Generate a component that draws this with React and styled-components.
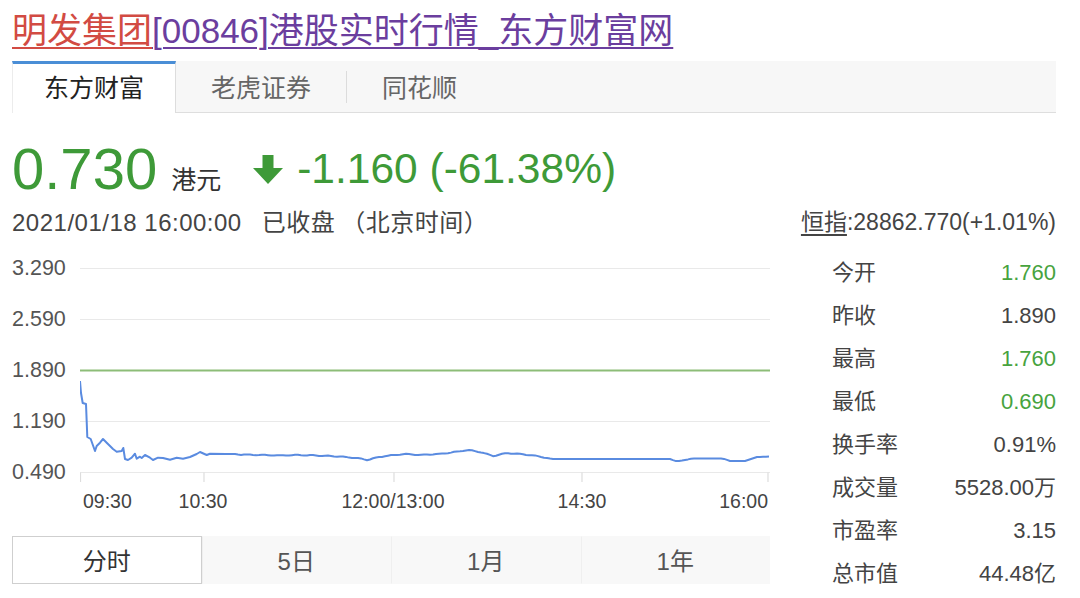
import React from "react";
import styled, { createGlobalStyle } from "styled-components";

const GlobalStyle = createGlobalStyle`
  html, body { margin: 0; padding: 0; background: #ffffff; }
  body {
    font-family: "Liberation Sans", "Noto Sans CJK SC", sans-serif;
    color: #333;
  }
  * { box-sizing: border-box; }
`;

const Page = styled.div`
  width: 1080px;
  height: 598px;
  padding: 9px 24px 0 12px;
  overflow: hidden;
`;

const Title = styled.h1`
  margin: 0 0 8px;
  font-size: 35px;
  font-weight: normal;
  line-height: 44px;
  white-space: nowrap;
`;

const TitleLink = styled.a`
  color: ${(p) => p.$color};
  text-decoration: underline;
  text-decoration-thickness: 2px;
  text-underline-offset: 4px;
`;

const TabBar = styled.div`
  display: flex;
  height: 52px;
  background: #f7f7f7;
  border-bottom: 1px solid #dedede;
`;

const Tab = styled.div`
  display: flex;
  align-items: center;
  padding: 0 ${(p) => (p.$active ? "31px" : "34px")} 5px;
  font-size: 25px;
  color: ${(p) => (p.$active ? "#222" : "#666")};
  background: ${(p) => (p.$active ? "#fff" : "transparent")};
  border-top: 3px solid ${(p) => (p.$active ? "#4a8ed6" : "transparent")};
  border-left: 1px solid ${(p) => (p.$active ? "#ececec" : "transparent")};
  border-right: 1px solid ${(p) => (p.$active ? "#dddddd" : "transparent")};
  margin-bottom: ${(p) => (p.$active ? "-1px" : "0")};
  position: relative;
`;

const TabDivider = styled.div`
  width: 1px;
  height: 32px;
  align-self: center;
  background: #dcdcdc;
`;

const PriceRow = styled.div`
  display: flex;
  align-items: center;
  height: 64px;
  margin-top: 24px;
`;

const Price = styled.span`
  font-size: 58px;
  line-height: 64px;
  color: #3e9a38;
  align-self: baseline;
`;

const Unit = styled.span`
  font-size: 25px;
  line-height: 30px;
  color: #333;
  margin-left: 14px;
  align-self: baseline;
`;

const Arrow = styled.svg`
  width: 34px;
  height: 34px;
  margin-left: 30px;
  flex: none;
`;

const Change = styled.span`
  font-size: 42.5px;
  line-height: 64px;
  color: #3e9a38;
  margin-left: 12px;
`;

const InfoRow = styled.div`
  display: flex;
  justify-content: space-between;
  align-items: center;
  height: 32px;
  margin-top: 3px;
  margin-bottom: 7px;
`;

const DateText = styled.div`
  font-size: 24px;
  letter-spacing: 0.5px;
  color: #444;
  white-space: nowrap;
`;

const Gap = styled.span`
  display: inline-block;
  width: ${(p) => p.$w}px;
`;

const IndexText = styled.div`
  font-size: 23px;
  color: #444;
  white-space: nowrap;
`;

const Under = styled.span`
  text-decoration: underline;
  text-underline-offset: 4px;
`;

const Main = styled.div`
  display: flex;
`;

const ChartPanel = styled.div`
  width: 758px;
  display: flex;
  flex-direction: column;
`;

const ChartArea = styled.div`
  display: flex;
  height: 240px;
`;

const YLabels = styled.div`
  width: 68px;
  height: 240px;
  display: flex;
  flex-direction: column;
  overflow: visible;
`;

const YLabel = styled.div`
  flex: none;
  height: 51px;
  line-height: 51px;
  font-size: 21.5px;
  color: #555;
`;

const ChartSvg = styled.svg`
  display: block;
  width: 690px;
  height: 240px;
`;

const XAxis = styled.div`
  position: relative;
  height: 24px;
  margin-top: 6px;
  margin-left: 68px;
  width: 690px;
`;

const XLabel = styled.span`
  position: absolute;
  top: 0;
  line-height: 24px;
  font-size: 19.5px;
  color: #444;
  white-space: nowrap;
  transform: translateX(${(p) => p.$shift});
`;

const PeriodBar = styled.div`
  display: grid;
  grid-template-columns: repeat(4, 1fr);
  height: 48px;
  margin-top: 23px;
  background: #f8f8f8;
`;

const Period = styled.div`
  display: flex;
  align-items: center;
  justify-content: center;
  padding-bottom: 2px;
  font-size: 24px;
  color: ${(p) => (p.$active ? "#333" : "#555")};
  background: ${(p) => (p.$active ? "#fff" : "transparent")};
  border: 1px solid ${(p) => (p.$active ? "#cfcfcf" : "transparent")};
  border-left-color: ${(p) => (p.$active ? "#cfcfcf" : "#efefef")};
`;

const Stats = styled.div`
  width: 224px;
  margin-left: auto;
  padding-top: 8px;
  display: flex;
  flex-direction: column;
`;

const StatRow = styled.div`
  display: flex;
  justify-content: space-between;
  height: 43px;
  line-height: 43px;
  font-size: 22px;
`;

const StatLabel = styled.span`
  color: #444;
`;

const StatValue = styled.span`
  color: ${(p) => (p.$green ? "#47a33e" : "#444")};
`;

// ---- chart data ----
const OX = 80;
const OY = 242;
const key = [
  [80, 380], [81, 392], [82.7, 402], [86, 403], [87.3, 436], [90.7, 438],
  [95, 450], [96.7, 445], [100, 441.7], [103, 438], [106.7, 441.7], [110, 445],
  [113, 448], [116.7, 450.7], [121.7, 450], [123.3, 447], [125, 458], [128, 459],
  [131.7, 456.7], [135, 452.7], [136.7, 457.7], [140, 455.7], [141.7, 457],
  [145, 454], [150, 456.7], [153, 459], [158, 456.7], [163, 457], [170, 458.7],
  [176.7, 456.7], [183, 457.7], [190, 456], [196.7, 453], [200, 451],
  [206.7, 454], [210, 452.7], [226, 453],
];
const flat = [
  [226, 453], [240, 453.5], [260, 454], [280, 454.5], [300, 454], [330, 455],
  [345, 456], [360, 457.5], [367, 459], [375, 457], [385, 455], [395, 454],
  [405, 453], [420, 454], [440, 453], [455, 451], [468, 449], [480, 451],
  [493, 455], [507, 452], [520, 453], [537, 455], [552, 458], [600, 458],
  [650, 458], [670, 458], [677, 460.5], [685, 459], [692, 457.5], [723, 457.5],
  [730, 460], [745, 460], [757, 456], [770, 455.5],
];

function interp(pts, x) {
  for (let i = 0; i < pts.length - 1; i++) {
    const [x0, y0] = pts[i];
    const [x1, y1] = pts[i + 1];
    if (x >= x0 && x <= x1) {
      const t = x1 === x0 ? 0 : (x - x0) / (x1 - x0);
      return y0 + (y1 - y0) * t;
    }
  }
  return pts[pts.length - 1][1];
}

const points = [...key];
for (let x = 229; x <= 770; x += 3) {
  const noise = x < 550 ? Math.sin(x * 1.7) * 0.35 : 0;
  points.push([x, interp(flat, x) + noise]);
}
const linePath = points
  .map(([x, y], i) => `${i === 0 ? "M" : "L"}${(x - OX).toFixed(1)} ${(y - OY).toFixed(1)}`)
  .join(" ");

const gridYs = [25.5, 76.5, 127.5, 178.5, 229.5];
const ticks = [0.5, 124, 314, 502, 688];

const stats = [
  ["今开", "1.760", true],
  ["昨收", "1.890", false],
  ["最高", "1.760", true],
  ["最低", "0.690", true],
  ["换手率", "0.91%", false],
  ["成交量", "5528.00万", false],
  ["市盈率", "3.15", false],
  ["总市值", "44.48亿", false],
];

export default function App() {
  return (
    <>
      <GlobalStyle />
      <Page>
        <Title>
          <TitleLink $color="#d24b43">明发集团</TitleLink>
          <TitleLink $color="#6b3e9e">[00846]港股实时行情_东方财富网</TitleLink>
        </Title>

        <TabBar>
          <Tab $active>东方财富</Tab>
          <Tab>老虎证券</Tab>
          <TabDivider />
          <Tab>同花顺</Tab>
        </TabBar>

        <PriceRow>
          <Price>0.730</Price>
          <Unit>港元</Unit>
          <Arrow viewBox="0 0 34 34">
            <path d="M11.5 3 H22.5 V16 H32 L17 32 L2 16 H11.5 Z" fill="#3e9a38" />
          </Arrow>
          <Change>-1.160 (-61.38%)</Change>
        </PriceRow>

        <InfoRow>
          <DateText>
            2021/01/18 16:00:00<Gap $w={20} />已收盘<Gap $w={6} />（北京时间）
          </DateText>
          <IndexText>
            <Under>恒指</Under>:28862.770(+1.01%)
          </IndexText>
        </InfoRow>

        <Main>
          <ChartPanel>
            <ChartArea>
              <YLabels>
                <YLabel>3.290</YLabel>
                <YLabel>2.590</YLabel>
                <YLabel>1.890</YLabel>
                <YLabel>1.190</YLabel>
                <YLabel>0.490</YLabel>
              </YLabels>
              <ChartSvg viewBox="0 0 690 240">
                {gridYs.map((y, i) =>
                  i === 2 ? null : (
                    <line key={y} x1="0" x2="690" y1={y} y2={y} stroke="#e9e9e9" strokeWidth="1.2" />
                  )
                )}
                {ticks.map((x) => (
                  <line key={x} x1={x} x2={x} y1="229.5" y2="239" stroke="#dddddd" strokeWidth="1.2" />
                ))}
                <line x1="0" x2="690" y1="127.5" y2="127.5" stroke="#8dbd78" strokeWidth="1.8" />
                <path d={linePath} fill="none" stroke="#5a8be0" strokeWidth="2" strokeLinejoin="round" />
              </ChartSvg>
            </ChartArea>
            <XAxis>
              <XLabel style={{ left: "3px" }} $shift="0">09:30</XLabel>
              <XLabel style={{ left: "123px" }} $shift="-50%">10:30</XLabel>
              <XLabel style={{ left: "313px" }} $shift="-50%">12:00/13:00</XLabel>
              <XLabel style={{ left: "502px" }} $shift="-50%">14:30</XLabel>
              <XLabel style={{ left: "688px" }} $shift="-100%">16:00</XLabel>
            </XAxis>
            <PeriodBar>
              <Period $active>分时</Period>
              <Period>5日</Period>
              <Period>1月</Period>
              <Period>1年</Period>
            </PeriodBar>
          </ChartPanel>

          <Stats>
            {stats.map(([label, value, green]) => (
              <StatRow key={label}>
                <StatLabel>{label}</StatLabel>
                <StatValue $green={green}>{value}</StatValue>
              </StatRow>
            ))}
          </Stats>
        </Main>
      </Page>
    </>
  );
}
